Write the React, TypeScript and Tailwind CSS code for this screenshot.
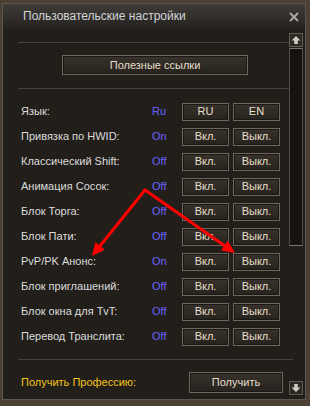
const rows = [
  { label: "Язык:", status: "Ru", on: "RU", off: "EN" },
  { label: "Привязка по HWID:", status: "On", on: "Вкл.", off: "Выкл." },
  { label: "Классический Shift:", status: "Off", on: "Вкл.", off: "Выкл." },
  { label: "Анимация Сосок:", status: "Off", on: "Вкл.", off: "Выкл." },
  { label: "Блок Торга:", status: "Off", on: "Вкл.", off: "Выкл." },
  { label: "Блок Пати:", status: "Off", on: "Вкл.", off: "Выкл." },
  { label: "PvP/PK Анонс:", status: "On", on: "Вкл.", off: "Выкл." },
  { label: "Блок приглашений:", status: "Off", on: "Вкл.", off: "Выкл." },
  { label: "Блок окна для TvT:", status: "Off", on: "Вкл.", off: "Выкл." },
  { label: "Перевод Транслита:", status: "Off", on: "Вкл.", off: "Выкл." },
];

function GameButton({ children, className = "" }: { children: React.ReactNode; className?: string }) {
  return (
    <button
      className={`flex items-center justify-center border border-[#6e675c] bg-gradient-to-b from-[#38332c] to-[#26221d] text-[11px] text-[#e6dfca] shadow-[inset_0_0_0_1px_#1a1714] ${className}`}
    >
      {children}
    </button>
  );
}

function ArrowBtn({ up }: { up?: boolean }) {
  return (
    <div className="flex h-[14px] w-[14px] items-center justify-center border border-[#5f5a52] bg-[#2c2925]">
      <svg width="10" height="10" viewBox="0 0 10 10" className={up ? "" : "rotate-180"}>
        <path d="M5 1 L9.5 5.5 L6.8 5.5 L6.8 9 L3.2 9 L3.2 5.5 L0.5 5.5 Z" fill="#cfcbc2" />
      </svg>
    </div>
  );
}

function Separator() {
  return <div className="h-px w-[271px] bg-[#46423d]" />;
}

export default function App() {
  return (
    <div
      className="relative h-[406px] w-[310px] overflow-hidden bg-[#4a4033] pt-[3px] pl-[2px]"
      style={{ fontFamily: '"Liberation Sans", Arial, sans-serif' }}
    >
      <div className="flex h-[397px] w-[304px] flex-col border border-[#5b564f] bg-[#221f1b]">
        {/* title */}
        <div className="flex h-[24px] shrink-0 items-center justify-between bg-gradient-to-b from-[#403d39] to-[#252220] pl-[20px] pr-[5px]">
          <span className="text-[12px] text-[#d4d6d8]">Пользовательские настройки</span>
          <svg width="12" height="12" viewBox="0 0 12 12" className="mt-[1px]">
            <path d="M2 2 L10 10 M10 2 L2 10" stroke="#a9a7a2" strokeWidth="2" />
          </svg>
        </div>

        <div className="flex flex-1">
          <div className="flex w-[286px] flex-col pl-[15px]">
            <div className="mt-[14px]">
              <Separator />
            </div>
            <GameButton className="mt-[12px] ml-[44px] h-[20px] w-[186px]">Полезные ссылки</GameButton>
            <div className="mt-[13px]">
              <Separator />
            </div>

            <div className="mt-[10px] flex flex-col">
              {rows.map((r) => (
                <div key={r.label} className="flex h-[25px] items-center text-[11px]">
                  <span className="w-[134px] pl-[3px] text-[#dcdcdc]">{r.label}</span>
                  <span className="w-[30px] text-[#6b62ff]">{r.status}</span>
                  <GameButton className="h-[18px] w-[47px]">{r.on}</GameButton>
                  <GameButton className="ml-[4px] h-[18px] w-[47px]">{r.off}</GameButton>
                </div>
              ))}
            </div>

            <div className="mt-[10px]">
              <div className="h-px w-[275px] bg-[#46423d]" />
            </div>

            <div className="mt-[12px] flex h-[21px] items-center">
              <span className="w-[171px] pl-[3px] text-[11px] text-[#f3c41a]">Получить Профессию:</span>
              <GameButton className="h-[21px] w-[94px]">Получить</GameButton>
            </div>
          </div>

          {/* scrollbar */}
          <div className="mt-[5px] flex w-[14px] flex-col">
            <ArrowBtn up />
            <div className="mt-[1px] h-[198px] w-[14px] border border-[#4f4a43] border-t-[#7a7468] border-b-[#7a7468] bg-[#15120f]" />
            <div className="flex-1" />
            <div className="mb-[4px]">
              <ArrowBtn />
            </div>
          </div>
        </div>
      </div>

      {/* red annotation arrows */}
      <svg className="pointer-events-none absolute left-0 top-0" width="310" height="406">
        <g stroke="#ff0000" strokeWidth="3" strokeLinecap="round">
          <line x1="145" y1="190" x2="100" y2="246" />
          <line x1="145" y1="190" x2="225" y2="246" />
        </g>
        <polygon points="92,256 104.8,249.7 95.4,242.1" fill="#ff0000" />
        <polygon points="235,253 221,250.5 227.8,240.7" fill="#ff0000" />
      </svg>
    </div>
  );
}
